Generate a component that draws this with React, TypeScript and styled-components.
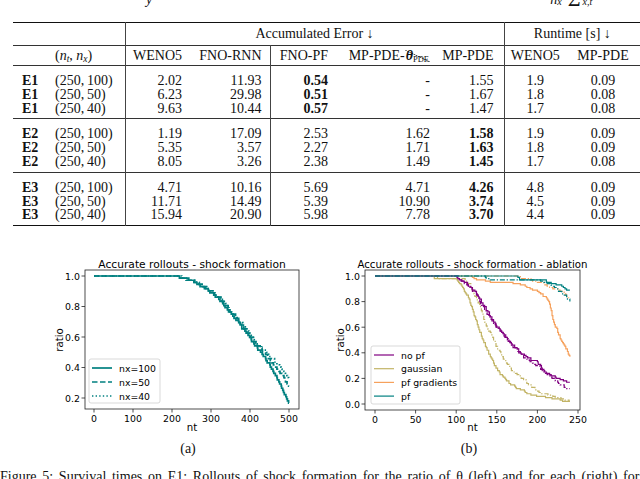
import React from 'react';
import styled, { createGlobalStyle } from 'styled-components';

const GlobalStyle = createGlobalStyle`
  html, body { margin: 0; padding: 0; background: #fff; overflow: hidden; }
  #root { width: 640px; height: 479px; }
`;

const Page = styled.div`
  width: 640px;
  height: 479px;
  overflow: hidden;
  display: flex;
  flex-direction: column;
  font-family: "Liberation Serif", "Times New Roman", serif;
  color: #111;
  background: #fff;
`;

/* ---------- cut-off line at the very top ---------- */
const TopLine = styled.div`
  height: 7px;
  flex-shrink: 0;
  overflow: hidden;
  display: flex;
  align-items: flex-end;
  font-size: 14px;
  line-height: 14px;
`;
const TopFrag = styled.span<{ $ml: number }>`
  margin-left: ${p => p.$ml}px;
  font-style: italic;
  white-space: nowrap;
  display: inline-flex;
  align-items: flex-end;
`;
const BigSigma = styled.span`
  font-style: normal;
  font-size: 22px;
  line-height: 17px;
  margin: 0 2px 0 6px;
`;
const SmallSub = styled.span`
  font-size: 10px;
  line-height: 10px;
`;

/* ---------- table ---------- */
const Table = styled.table`
  margin: 15px 0 0 13px;
  width: 627px;
  border-collapse: collapse;
  table-layout: fixed;
  font-size: 14px;
  flex-shrink: 0;
`;
const Col = styled.col<{ $w: number }>`
  width: ${p => p.$w}px;
`;
const Head = styled.thead`
  border-top: 1.6px solid #111;
`;
const Group = styled.tbody<{ $last?: boolean }>`
  border-top: 1px solid #333;
  border-bottom: ${p => (p.$last ? '1.6px solid #111' : 'none')};
`;
const Row = styled.tr<{ $pt: number; $pb: number; $lh: number; $rule?: boolean }>`
  border-bottom: ${p => (p.$rule ? '1px solid #333' : 'none')};
  & > td {
    padding-top: ${p => p.$pt}px;
    padding-bottom: ${p => p.$pb}px;
    line-height: ${p => p.$lh}px;
    height: ${p => p.$lh}px;
  }
`;
type Align = 'left' | 'right' | 'center';
const Cell = styled.td<{ $align: Align; $bar?: boolean; $bold?: boolean; $pl?: number; $pr?: number }>`
  text-align: ${p => p.$align};
  padding-left: ${p => p.$pl ?? 0}px;
  padding-right: ${p => p.$pr ?? 0}px;
  border-right: ${p => (p.$bar ? '1px solid #444' : 'none')};
  font-weight: ${p => (p.$bold ? 700 : 400)};
  white-space: nowrap;
  overflow: visible;
`;
const It = styled.i`
  font-style: italic;
`;
const Sub = styled.sub`
  font-size: 9.5px;
  line-height: 0;
  vertical-align: -2px;
`;
const Theta = styled.span`
  font-style: italic;
  font-weight: 700;
`;
const Cancel = styled.span`
  display: inline-block;
  line-height: 12px;
  padding: 0 1px;
  background: linear-gradient(
    to top right,
    transparent calc(50% - 0.6px),
    #444 50%,
    transparent calc(50% + 0.6px)
  );
`;
const PdeSub = styled.span`
  font-size: 8.5px;
  vertical-align: -2px;
  line-height: 0;
`;

type ColSpec = { align: Align; bar?: boolean; pl?: number; pr?: number };
const COLS: ColSpec[] = [
  { align: 'left', pl: 9 },
  { align: 'left', pl: 9, bar: true },
  { align: 'right', pr: 7 },
  { align: 'right', pr: 8, bar: true },
  { align: 'right', pr: 7 },
  { align: 'right', pr: 7 },
  { align: 'right', pr: 10, bar: true },
  { align: 'center' },
  { align: 'center' },
];
const WIDTHS = [33, 79, 64, 81, 65, 102, 67, 62, 74];

type Val = { v: string; b?: boolean };
type DataRow = { exp: string; nt: number; nx: number; vals: Val[] };

const v = (s: string, b = false): Val => ({ v: s, b });

const GROUPS: DataRow[][] = [
  [
    { exp: 'E1', nt: 250, nx: 100, vals: [v('2.02'), v('11.93'), v('0.54', true), v('-'), v('1.55'), v('1.9'), v('0.09')] },
    { exp: 'E1', nt: 250, nx: 50, vals: [v('6.23'), v('29.98'), v('0.51', true), v('-'), v('1.67'), v('1.8'), v('0.08')] },
    { exp: 'E1', nt: 250, nx: 40, vals: [v('9.63'), v('10.44'), v('0.57', true), v('-'), v('1.47'), v('1.7'), v('0.08')] },
  ],
  [
    { exp: 'E2', nt: 250, nx: 100, vals: [v('1.19'), v('17.09'), v('2.53'), v('1.62'), v('1.58', true), v('1.9'), v('0.09')] },
    { exp: 'E2', nt: 250, nx: 50, vals: [v('5.35'), v('3.57'), v('2.27'), v('1.71'), v('1.63', true), v('1.8'), v('0.09')] },
    { exp: 'E2', nt: 250, nx: 40, vals: [v('8.05'), v('3.26'), v('2.38'), v('1.49'), v('1.45', true), v('1.7'), v('0.08')] },
  ],
  [
    { exp: 'E3', nt: 250, nx: 100, vals: [v('4.71'), v('10.16'), v('5.69'), v('4.71'), v('4.26', true), v('4.8'), v('0.09')] },
    { exp: 'E3', nt: 250, nx: 50, vals: [v('11.71'), v('14.49'), v('5.39'), v('10.90'), v('3.74', true), v('4.5'), v('0.09')] },
    { exp: 'E3', nt: 250, nx: 40, vals: [v('15.94'), v('20.90'), v('5.98'), v('7.78'), v('3.70', true), v('4.4'), v('0.09')] },
  ],
];

function sp(i: number) {
  const s = COLS[i];
  return { $align: s.align, $bar: s.bar, $pl: s.pl, $pr: s.pr };
}

function ResultsTable() {
  return (
    <Table>
      <colgroup>
        {WIDTHS.map((w, i) => (
          <Col key={i} $w={w} />
        ))}
      </colgroup>
      <Head>
        <Row $pt={4} $pb={4} $lh={14} $rule>
          <Cell colSpan={2} $align="left" $bar />
          <Cell colSpan={5} $align="center" $bar>
            Accumulated Error ↓
          </Cell>
          <Cell colSpan={2} $align="center">
            Runtime [s] ↓
          </Cell>
        </Row>
        <Row $pt={3} $pb={2} $lh={14}>
          <Cell {...sp(0)} />
          <Cell {...sp(1)}>
            (<It>n</It>
            <Sub>
              <It>t</It>
            </Sub>
            , <It>n</It>
            <Sub>
              <It>x</It>
            </Sub>
            )
          </Cell>
          <Cell {...sp(2)}>WENO5</Cell>
          <Cell {...sp(3)}>FNO-RNN</Cell>
          <Cell {...sp(4)}>FNO-PF</Cell>
          <Cell {...sp(5)}>
            MP-PDE-
            <Cancel>
              <Theta>θ</Theta>
              <PdeSub>PDE</PdeSub>
            </Cancel>
          </Cell>
          <Cell {...sp(6)}>MP-PDE</Cell>
          <Cell {...sp(7)}>WENO5</Cell>
          <Cell {...sp(8)}>MP-PDE</Cell>
        </Row>
      </Head>
      {GROUPS.map((g, gi) => (
        <Group key={gi} $last={gi === GROUPS.length - 1}>
          {g.map((r, ri) => (
            <Row key={ri} $pt={ri === 0 ? 8 : 0} $pb={ri === g.length - 1 ? 3 : 0} $lh={13.8}>
              <Cell {...sp(0)} $bold>
                {r.exp}
              </Cell>
              <Cell {...sp(1)}>
                ({r.nt},&thinsp;{r.nx})
              </Cell>
              {r.vals.map((val, vi) => (
                <Cell key={vi} {...sp(vi + 2)} $bold={val.b}>
                  {val.v}
                </Cell>
              ))}
            </Row>
          ))}
        </Group>
      ))}
    </Table>
  );
}

/* ---------- charts ---------- */
type Pt = [number, number];

function interp(pts: Pt[], t: number) {
  if (t <= pts[0][0]) return pts[0][1];
  for (let i = 1; i < pts.length; i++) {
    if (t <= pts[i][0]) {
      const [x0, y0] = pts[i - 1];
      const [x1, y1] = pts[i];
      return y0 + ((y1 - y0) * (t - x0)) / (x1 - x0);
    }
  }
  return pts[pts.length - 1][1];
}
function noise(i: number, seed: number) {
  const s = Math.sin(i * 12.9898 + seed * 78.233) * 43758.5453;
  return s - Math.floor(s);
}
function stairs(
  pts: Pt[],
  sx: (n: number) => number,
  sy: (r: number) => number,
  q: number,
  seed: number,
  jitter: number
) {
  const start = pts[0][0];
  const end = pts[pts.length - 1][0];
  let prev = pts[0][1];
  let d = `M${sx(start).toFixed(2)},${sy(prev).toFixed(2)}`;
  for (let t = start + 1; t <= end; t += 1) {
    let r = interp(pts, t);
    if (r < 0.995) r += (noise(t, seed) - 0.5) * jitter;
    r = Math.round(r / q) * q;
    if (r > prev) r = prev;
    if (r < prev - 1e-6) {
      d += ` H${sx(t).toFixed(2)} V${sy(r).toFixed(2)}`;
      prev = r;
    }
  }
  d += ` H${sx(end).toFixed(2)}`;
  return d;
}

const ChartSvg = styled.svg`
  display: block;
  overflow: visible;
`;
const TitleText = styled.text<{ $size: number }>`
  font-family: "DejaVu Sans", "Liberation Sans", sans-serif;
  font-size: ${p => p.$size}px;
  fill: #000;
`;
const TickText = styled.text`
  font-family: "DejaVu Sans", "Liberation Sans", sans-serif;
  font-size: 9.4px;
  fill: #000;
`;
const AxisText = styled.text`
  font-family: "DejaVu Sans", "Liberation Sans", sans-serif;
  font-size: 10.2px;
  fill: #000;
`;
const LegendText = styled.text`
  font-family: "DejaVu Sans", "Liberation Sans", sans-serif;
  font-size: 9.3px;
  fill: #000;
`;

const TEAL = '#008080';
const PURPLE = '#800080';
const KHAKI = '#c2b466';
const SANDY = '#f6a15c';

type Series = { pts: Pt[]; color: string; dash?: string; width: number; seed: number };
type LegendItem = { label: string; color: string; dash?: string; width: number };

type ChartProps = {
  vb: [number, number, number, number];
  box: { l: number; r: number; t: number; b: number };
  title: string;
  titleSize: number;
  sx: (n: number) => number;
  sy: (r: number) => number;
  xticks: number[];
  yticks: number[];
  series: Series[];
  q: number;
  jitter: number;
  legend: { x: number; y: number; w: number; h: number; items: LegendItem[]; y0: number; dy: number };
  ylabelX: number;
};

function Chart(p: ChartProps) {
  const { box, sx, sy } = p;
  const midX = (box.l + box.r) / 2;
  return (
    <ChartSvg width={p.vb[2]} height={p.vb[3]} viewBox={p.vb.join(' ')}>
      <TitleText $size={p.titleSize} x={midX} y={265} textAnchor="middle" dominantBaseline="central">
        {p.title}
      </TitleText>
      {p.series.map((s, i) => (
        <path
          key={i}
          d={stairs(s.pts, sx, sy, p.q, s.seed, p.jitter)}
          fill="none"
          stroke={s.color}
          strokeWidth={s.width}
          strokeDasharray={s.dash}
          strokeLinejoin="miter"
        />
      ))}
      <rect
        x={box.l}
        y={box.t}
        width={box.r - box.l}
        height={box.b - box.t}
        fill="none"
        stroke="#222"
        strokeWidth={0.8}
      />
      {p.yticks.map(t => (
        <g key={`y${t}`}>
          <line x1={box.l - 3.5} x2={box.l} y1={sy(t)} y2={sy(t)} stroke="#222" strokeWidth={0.8} />
          <TickText x={box.l - 5} y={sy(t)} textAnchor="end" dominantBaseline="central">
            {t.toFixed(1)}
          </TickText>
        </g>
      ))}
      {p.xticks.map(t => (
        <g key={`x${t}`}>
          <line x1={sx(t)} x2={sx(t)} y1={box.b} y2={box.b + 3.5} stroke="#222" strokeWidth={0.8} />
          <TickText x={sx(t)} y={box.b + 9} textAnchor="middle" dominantBaseline="central">
            {t}
          </TickText>
        </g>
      ))}
      <AxisText x={midX} y={428} textAnchor="middle" dominantBaseline="central">
        nt
      </AxisText>
      <AxisText
        x={p.ylabelX}
        y={341}
        textAnchor="middle"
        dominantBaseline="central"
        transform={`rotate(-90 ${p.ylabelX} 341)`}
      >
        ratio
      </AxisText>
      <rect
        x={p.legend.x}
        y={p.legend.y}
        width={p.legend.w}
        height={p.legend.h}
        rx={2}
        fill="#fff"
        fillOpacity={0.85}
        stroke="#cfcfcf"
        strokeWidth={0.8}
      />
      {p.legend.items.map((it, i) => {
        const y = p.legend.y0 + i * p.legend.dy;
        return (
          <g key={it.label}>
            <line
              x1={p.legend.x + 3}
              x2={p.legend.x + 23}
              y1={y}
              y2={y}
              stroke={it.color}
              strokeWidth={it.width}
              strokeDasharray={it.dash}
            />
            <LegendText x={p.legend.x + 30} y={y} dominantBaseline="central">
              {it.label}
            </LegendText>
          </g>
        );
      })}
    </ChartSvg>
  );
}

const sxA = (n: number) => 94 + n * 0.39;
const syA = (r: number) => 277 + (1 - r) * 152.5;
const sxB = (n: number) => 375 + n * 0.812;
const syB = (r: number) => 277 + (1 - r) * 128;

const DASH = '5.5 2.5';
const DOT = '1.4 2.2';
const DASHDOT = '5 1.8 1.3 1.8';

const A_SOLID: Pt[] = [[0, 1], [200, 1], [225, 0.993], [254, 0.976], [290, 0.915], [323, 0.85], [357, 0.74], [391, 0.63], [425, 0.51], [451, 0.42], [465, 0.36], [480, 0.28], [500, 0.17]];
const A_DASH: Pt[] = [[0, 1], [205, 1], [230, 0.99], [254, 0.975], [290, 0.925], [323, 0.86], [357, 0.755], [391, 0.645], [425, 0.535], [451, 0.46], [470, 0.4], [485, 0.34], [500, 0.28]];
const A_DOT: Pt[] = [[0, 1], [210, 1], [235, 0.99], [258, 0.975], [290, 0.93], [323, 0.865], [357, 0.76], [391, 0.65], [425, 0.545], [451, 0.48], [470, 0.43], [485, 0.38], [500, 0.33]];

const B_PF: Pt[] = [[0, 1], [175, 1], [178, 0.98], [207, 0.98], [215, 0.95], [228, 0.93], [234, 0.9], [240, 0.89]];
const B_PF_DD: Pt[] = [[0, 1], [133, 1], [136, 0.985], [200, 0.985], [212, 0.95], [224, 0.9], [232, 0.86], [240, 0.81]];
const B_GRAD: Pt[] = [[0, 1], [115, 1], [120, 0.99], [138, 0.965], [175, 0.95], [191, 0.91], [208, 0.85], [214, 0.8], [220, 0.64], [228, 0.51], [236, 0.43], [240, 0.37]];
const B_GRAD_DD: Pt[] = [[0, 1], [170, 1], [190, 0.98], [205, 0.95], [220, 0.91], [232, 0.87], [240, 0.82]];
const B_NOPF: Pt[] = [[0, 1], [100, 1], [103, 0.975], [109, 0.965], [121, 0.9], [134, 0.77], [150, 0.61], [167, 0.48], [183, 0.38], [200, 0.33], [208, 0.26], [220, 0.22], [232, 0.19], [240, 0.17]];
const B_NOPF_DD: Pt[] = [[0, 1], [102, 1], [106, 0.97], [122, 0.88], [135, 0.74], [150, 0.6], [167, 0.47], [183, 0.37], [200, 0.3], [215, 0.22], [228, 0.16], [240, 0.11]];
const B_GAUSS: Pt[] = [[0, 1], [70, 1], [73, 0.99], [100, 0.99], [111, 0.875], [117, 0.8], [129, 0.56], [140, 0.4], [150, 0.27], [166, 0.16], [191, 0.08], [220, 0.05], [240, 0.02]];
const B_GAUSS_DD: Pt[] = [[0, 1], [75, 1], [78, 0.99], [107, 0.99], [117, 0.93], [128, 0.78], [138, 0.6], [150, 0.45], [160, 0.33], [169, 0.26], [188, 0.17], [200, 0.1], [225, 0.05], [240, 0.03]];

function ChartA() {
  return (
    <Chart
      vb={[48, 253, 280, 185]}
      box={{ l: 85, r: 299, t: 271, b: 410 }}
      title="Accurate rollouts - shock formation"
      titleSize={10.7}
      sx={sxA}
      sy={syA}
      xticks={[0, 100, 200, 300, 400, 500]}
      yticks={[1.0, 0.8, 0.6, 0.4, 0.2]}
      q={1 / 72}
      jitter={0.025}
      series={[
        { pts: A_DOT, color: TEAL, dash: DOT, width: 1.7, seed: 3 },
        { pts: A_DASH, color: TEAL, dash: DASH, width: 1.7, seed: 2 },
        { pts: A_SOLID, color: TEAL, width: 1.7, seed: 1 },
      ]}
      legend={{
        x: 89,
        y: 360,
        w: 71,
        h: 44,
        y0: 369,
        dy: 14,
        items: [
          { label: 'nx=100', color: TEAL, width: 1.7 },
          { label: 'nx=50', color: TEAL, dash: DASH, width: 1.7 },
          { label: 'nx=40', color: TEAL, dash: DOT, width: 1.7 },
        ],
      }}
      ylabelX={59}
    />
  );
}

function ChartB() {
  return (
    <Chart
      vb={[330, 253, 278, 185]}
      box={{ l: 365, r: 580, t: 271, b: 411 }}
      title="Accurate rollouts - shock formation - ablation"
      titleSize={10.2}
      sx={sxB}
      sy={syB}
      xticks={[0, 50, 100, 150, 200, 250]}
      yticks={[1.0, 0.8, 0.6, 0.4, 0.2, 0.0]}
      q={1 / 100}
      jitter={0.022}
      series={[
        { pts: B_GAUSS_DD, color: KHAKI, dash: DASHDOT, width: 1.2, seed: 11 },
        { pts: B_GAUSS, color: KHAKI, width: 1.2, seed: 12 },
        { pts: B_GRAD_DD, color: SANDY, dash: DASHDOT, width: 1.2, seed: 13 },
        { pts: B_GRAD, color: SANDY, width: 1.2, seed: 14 },
        { pts: B_NOPF_DD, color: PURPLE, dash: DASHDOT, width: 1.2, seed: 15 },
        { pts: B_NOPF, color: PURPLE, width: 1.2, seed: 16 },
        { pts: B_PF_DD, color: TEAL, dash: DASHDOT, width: 1.2, seed: 17 },
        { pts: B_PF, color: TEAL, width: 1.2, seed: 18 },
      ]}
      legend={{
        x: 371,
        y: 347,
        w: 89,
        h: 58,
        y0: 356,
        dy: 13.7,
        items: [
          { label: 'no pf', color: PURPLE, width: 1.2 },
          { label: 'gaussian', color: KHAKI, width: 1.2 },
          { label: 'pf gradients', color: SANDY, width: 1.2 },
          { label: 'pf', color: TEAL, width: 1.2 },
        ],
      }}
      ylabelX={340}
    />
  );
}

const FigRow = styled.div`
  display: flex;
  gap: 2px;
  padding-left: 48px;
  margin-top: 26px;
  flex-shrink: 0;
`;
const Figure = styled.div<{ $w: number }>`
  width: ${p => p.$w}px;
  display: flex;
  flex-direction: column;
  align-items: center;
`;
const SubLabel = styled.div`
  font-size: 14px;
  line-height: 16px;
  margin-top: 4px;
`;
const Caption = styled.p`
  margin: 12px 0 0 0;
  font-size: 14px;
  line-height: 16px;
  white-space: nowrap;
  word-spacing: 2.2px;
  flex-shrink: 0;
`;

export default function App() {
  return (
    <Page>
      <GlobalStyle />
      <TopLine>
        <TopFrag $ml={146}>y</TopFrag>
        <TopFrag $ml={398}>
          n<SmallSub>x</SmallSub>
          <BigSigma>Σ</BigSigma>
          <SmallSub>x,t</SmallSub>
        </TopFrag>
      </TopLine>
      <ResultsTable />
      <FigRow>
        <Figure $w={280}>
          <ChartA />
          <SubLabel>(a)</SubLabel>
        </Figure>
        <Figure $w={278}>
          <ChartB />
          <SubLabel>(b)</SubLabel>
        </Figure>
      </FigRow>
      <Caption>
        Figure 5: Survival times on E1: Rollouts of shock formation for the ratio of θ (left) and for each (right) for both
      </Caption>
    </Page>
  );
}
